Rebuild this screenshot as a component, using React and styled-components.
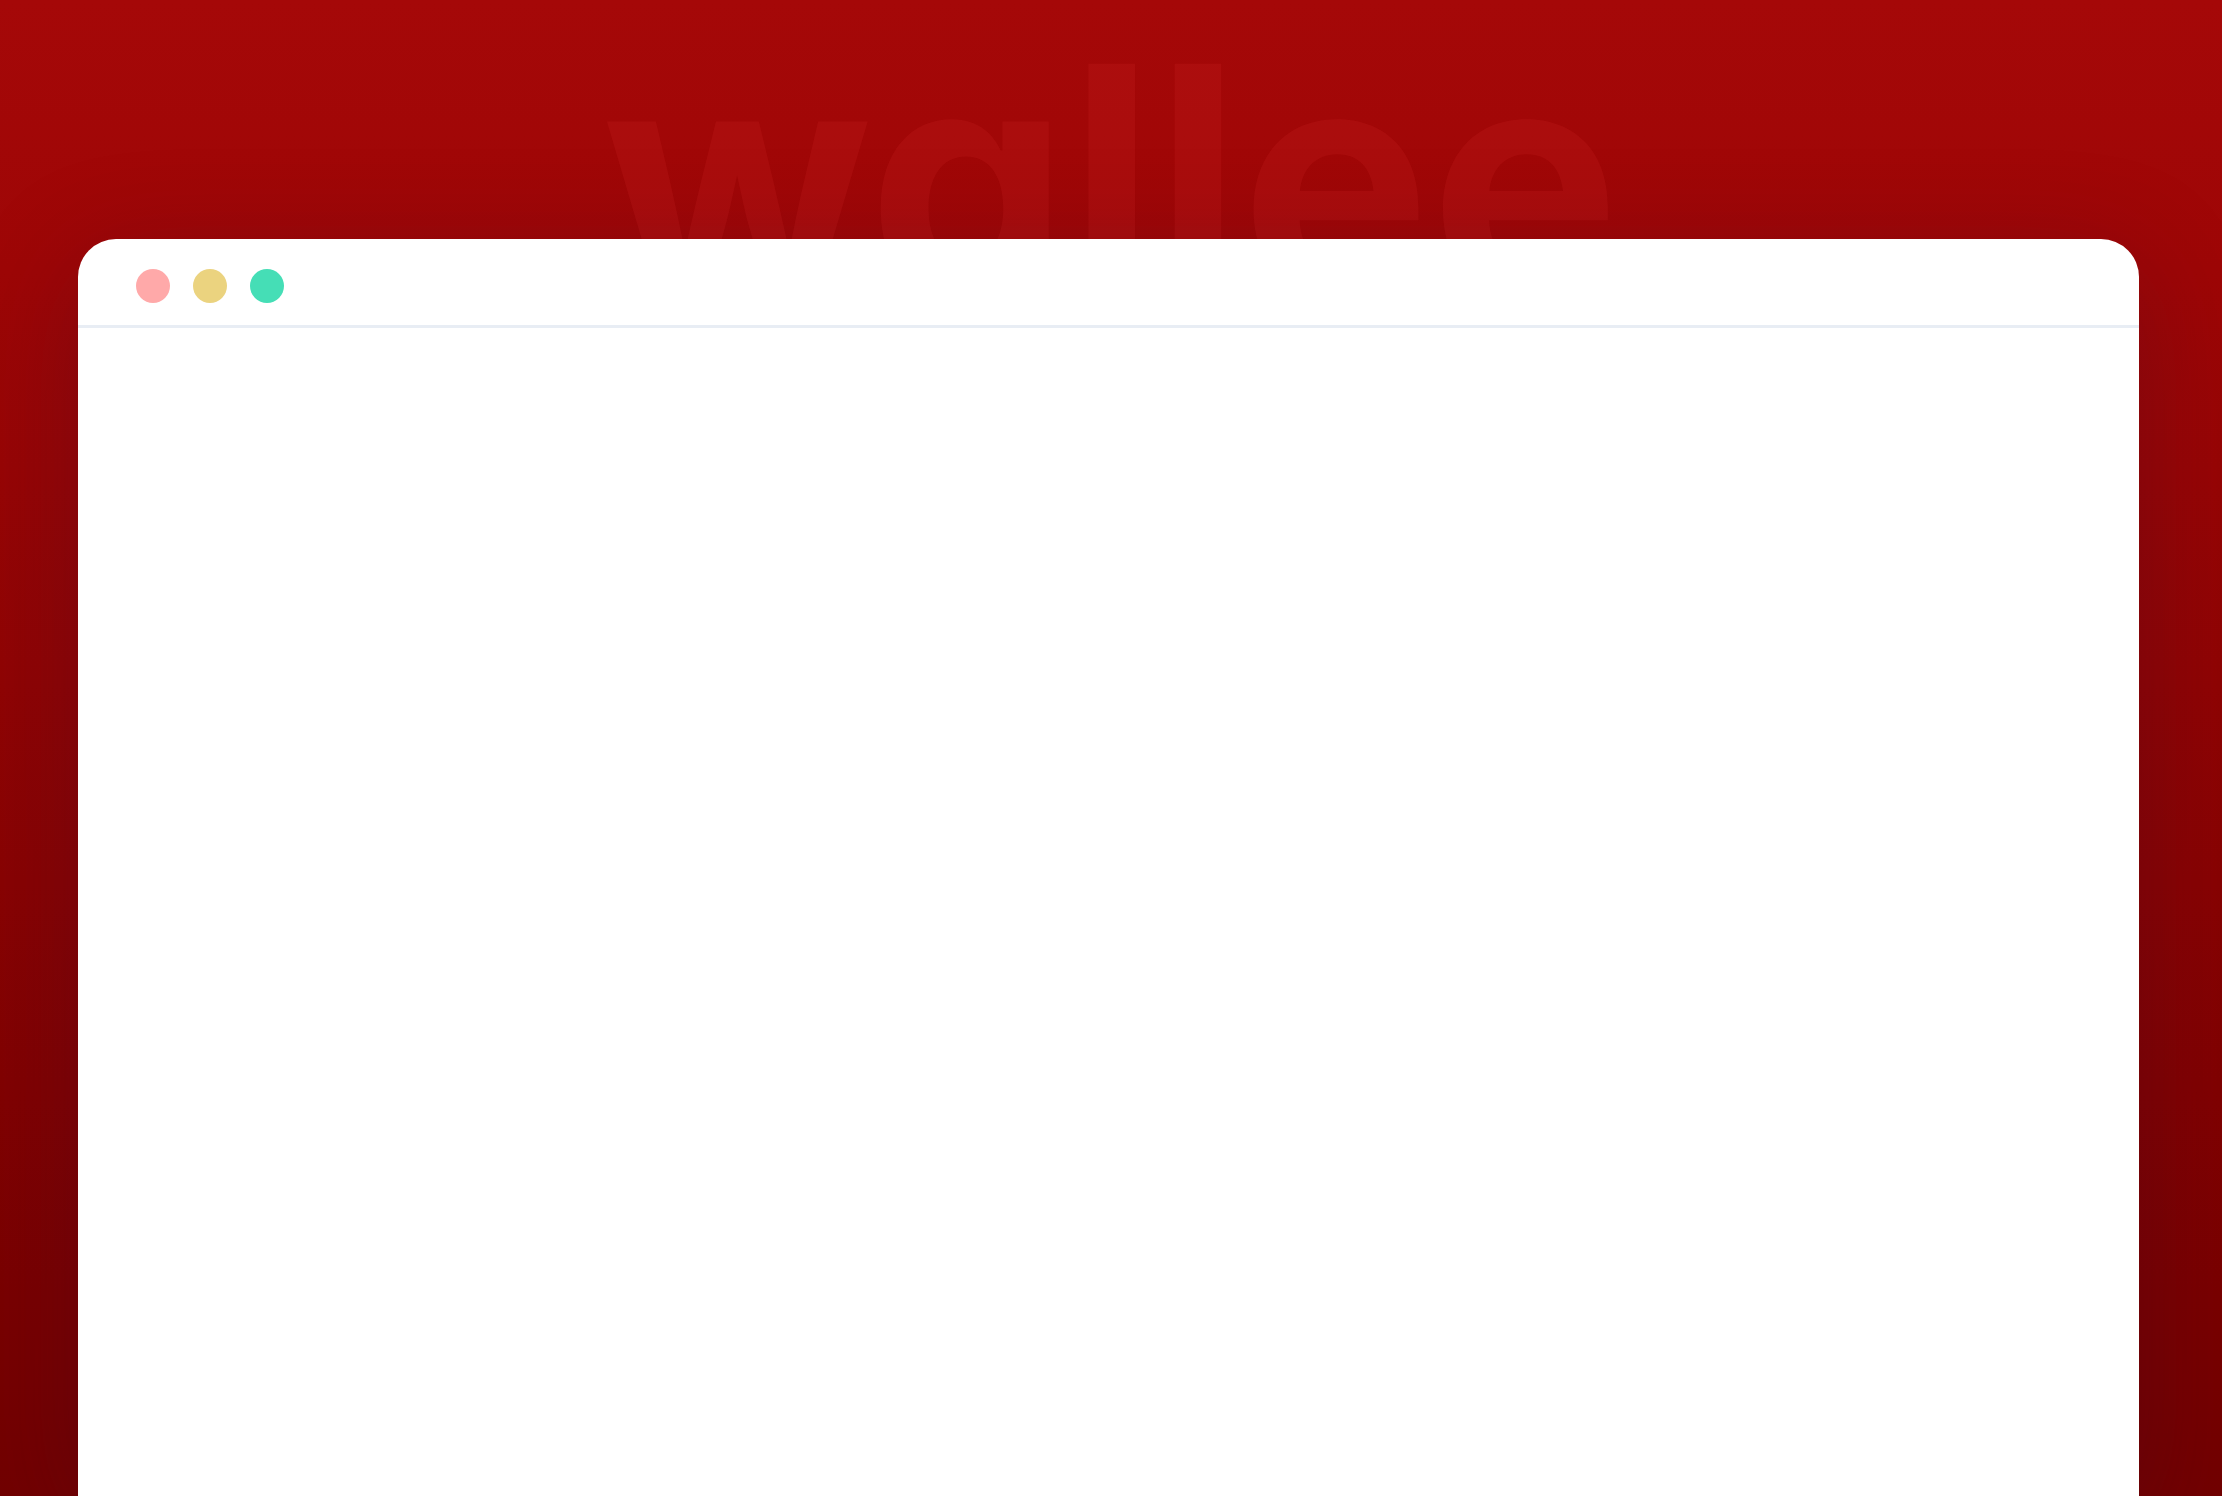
import React from "react";
import styled, { createGlobalStyle } from "styled-components";

const dots = [
  { name: "close", color: "#ffa9a9" },
  { name: "minimize", color: "#ebd37f" },
  { name: "expand", color: "#45deb6" },
];

const App = () => {
  return (
    <Page>
      <GlobalStyle />
      <Header>
        <Brand>wallee</Brand>
      </Header>
      <Window>
        <TitleBar>
          {dots.map((dot) => (
            <Dot key={dot.name} type="button" aria-label={dot.name} $color={dot.color} />
          ))}
        </TitleBar>
      </Window>
    </Page>
  );
};

const GlobalStyle = createGlobalStyle`
  * {
    box-sizing: border-box;
  }

  body {
    margin: 0;
  }
`;

const Page = styled.div`
  display: flex;
  flex-direction: column;
  min-height: 100vh;
  background: linear-gradient(180deg, #a50808 0%, #9e0606 18%, #720000 100%);
`;

const Header = styled.header`
  display: flex;
  justify-content: center;
  height: 239px;
`;

const Brand = styled.h1`
  margin: 0;
  font-family: Inter, "Liberation Sans", sans-serif;
  font-size: 318px;
  font-weight: 700;
  line-height: 360px;
  color: rgba(215, 40, 40, 0.19);
  /* single-storey a */
  font-feature-settings: "cv11";
`;

/* sits above the lower half of the brand name */
const Window = styled.main`
  position: relative;
  flex: 1;
  margin: 0 83px 0 78px;
  background-color: #ffffff;
  border-radius: 38px 38px 0 0;
  box-shadow: 0 24px 110px rgba(50, 15, 45, 0.27);
`;

const TitleBar = styled.div`
  display: flex;
  align-items: center;
  gap: 23px;
  height: 89px;
  padding: 8px 58px 0;
  border-bottom: 3px solid #e8edf4;
`;

const Dot = styled.button`
  width: 34px;
  height: 34px;
  padding: 0;
  border: none;
  border-radius: 50%;
  background-color: ${({ $color }) => $color};
  cursor: pointer;
`;

export default App;
